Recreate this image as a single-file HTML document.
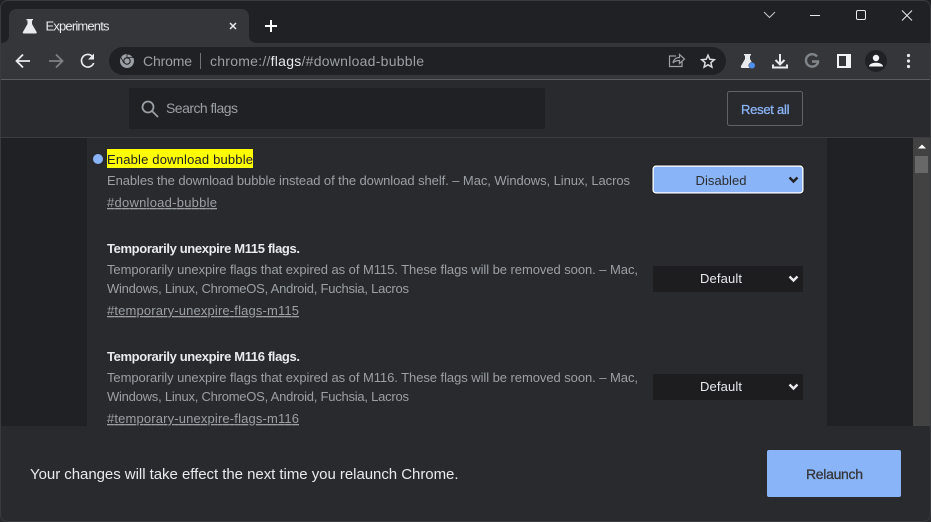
<!DOCTYPE html>
<html><head><meta charset="utf-8"><title>Experiments</title>
<style>
html,body{margin:0;padding:0;background:#202124;width:931px;height:522px;overflow:hidden}
svg{display:block;font-family:"Liberation Sans",sans-serif}
.t{font-size:13px;fill:#9aa0a6}
.b{font-size:13px;font-weight:700;fill:#e8eaed}
.l{font-size:13px;fill:#9aa0a6;text-decoration:underline}
</style></head><body>
<svg width="931" height="522" viewBox="0 0 931 522" xmlns="http://www.w3.org/2000/svg">
<rect width="931" height="522" fill="#202124"/>
<rect x="0" y="0" width="931" height="43" fill="#202124"/>
<!-- tab -->
<path d="M0 43C6 43 9 40 9 36V17C9 12 12 9 17 9H241C246 9 249 12 249 17V36C249 40 252 43 258 43Z" fill="#35363a"/>
<path d="M26.500 19h6.500v1.400h-1v3.600l4.600 8c.4.800 0 1.500-.9 1.500H23.800c-.9 0-1.300-.7-.9-1.500L27.500 24v-3.600h-1z" fill="#e8eaed"/>
<text x="45.500" y="30.500" font-size="13" fill="#e8eaed" textLength="64">Experiments</text>
<path d="M230 23l6 6M236 23l-6 6" stroke="#e8eaed" stroke-width="1.500"/>
<path d="M271 20v12M265 26h12" stroke="#fff" stroke-width="2"/>
<!-- window controls -->
<path d="M764 12l5.500 5.500L775 12" fill="none" stroke="#c4c7cc" stroke-width="1"/>
<path d="M810 15.500h10" stroke="#e8eaed" stroke-width="1"/>
<rect x="856.500" y="10.500" width="9" height="9" rx="1.500" fill="none" stroke="#e8eaed" stroke-width="1"/>
<path d="M902 10.500l10 10M912 10.500l-10 10" stroke="#e8eaed" stroke-width="1"/>
<!-- toolbar -->
<rect x="0" y="43" width="931" height="36" fill="#35363a"/>
<rect x="0" y="79" width="931" height="1" fill="#5a5c60"/>
<path d="M30 61H17M23 54.500L16.500 61l6.500 6.500" fill="none" stroke="#e8eaed" stroke-width="1.800"/>
<path d="M49 61h13M56 54.500l6.500 6.500-6.500 6.500" fill="none" stroke="#7d8287" stroke-width="1.800"/>
<path d="M92.500 56.500A6.300 6.300 0 1 0 93.700 63" fill="none" stroke="#e8eaed" stroke-width="1.700"/>
<path d="M94 53.500v6h-6z" fill="#e8eaed"/>
<rect x="109" y="47" width="617" height="28" rx="14" fill="#202124"/>
<circle cx="127" cy="61" r="7" fill="#9aa0a6"/>
<path d="M127 54a7 7 0 0 1 6.100 3.500H127zM120.900 57.500l3 5.500" stroke="#202124" stroke-width=".8" fill="none"/>
<circle cx="127" cy="61" r="3.200" fill="#9aa0a6" stroke="#202124" stroke-width="1.100"/>
<text x="143" y="66" font-size="14" fill="#9aa0a6" textLength="49">Chrome</text>
<rect x="200" y="53" width="1" height="16" fill="#6f7377"/>
<text x="210" y="66" font-size="14" fill="#9aa0a6" textLength="214">chrome://<tspan fill="#e8eaed">flags</tspan>/#download-bubble</text>
<!-- share -->
<path d="M676 56h-6.500v10.500h12.500V62" fill="none" stroke="#9aa0a6" stroke-width="1.200"/>
<path d="M673 63c.5-3.500 3-5.500 6.500-5.500V54.500l5 4.500-5 4.500v-3c-2.500 0-5 .5-6.500 2.500z" fill="none" stroke="#9aa0a6" stroke-width="1.200"/>
<!-- star -->
<path d="M708 55.200l1.800 4.100 4.500.4-3.400 3 1 4.400-3.900-2.300-3.900 2.300 1-4.400-3.400-3 4.500-.4z" fill="none" stroke="#dadce0" stroke-width="1.500"/>
<!-- flask -->
<path d="M744 54h7v1.500h-1v3.500l4 7c.5 1 0 2-1 2h-11c-1 0-1.500-1-1-2l4-7v-3.500h-1z" fill="#e8eaed"/>
<circle cx="752" cy="65.500" r="3.200" fill="#4f8ff0" stroke="#35363a" stroke-width=".5"/>
<!-- download -->
<path d="M780 54v10M775.500 60l4.500 4.500 4.500-4.500" fill="none" stroke="#e8eaed" stroke-width="2"/>
<path d="M773 64.500v3h14v-3" fill="none" stroke="#e8eaed" stroke-width="2"/>
<!-- G -->
<path d="M817 56.500A6.200 6.200 0 1 0 818 62.500V61.500H812" fill="none" stroke="#80868b" stroke-width="2.400"/>
<!-- side panel -->
<rect x="837" y="54" width="14" height="14" fill="#f1f3f4"/>
<rect x="839" y="56" width="7" height="10" fill="#35363a"/>
<!-- avatar -->
<circle cx="876" cy="61" r="11" fill="#202124"/>
<circle cx="876" cy="58" r="3.200" fill="#f1f3f4"/>
<path d="M869 66.500c0-2.500 3.500-3.800 7-3.800s7 1.300 7 3.800z" fill="#f1f3f4"/>
<!-- menu -->
<circle cx="908.500" cy="55.500" r="1.600" fill="#e8eaed"/><circle cx="908.500" cy="61" r="1.600" fill="#e8eaed"/><circle cx="908.500" cy="66.500" r="1.600" fill="#e8eaed"/>
<!-- header -->
<rect x="0" y="80" width="931" height="57" fill="#292a2d"/>
<rect x="0" y="137" width="931" height="1" fill="#3c3d40"/>
<rect x="129" y="88" width="416" height="41" rx="2" fill="#202124"/>
<circle cx="148" cy="107" r="5.500" fill="none" stroke="#9aa0a6" stroke-width="1.800"/>
<path d="M152 111l6 6" stroke="#9aa0a6" stroke-width="1.800"/>
<text x="166" y="113" font-size="14" fill="#9aa0a6" textLength="72">Search flags</text>
<rect x="727.500" y="91.500" width="75" height="34" rx="2" fill="none" stroke="#5f6368"/>
<text x="741" y="114" font-size="13" fill="#8ab4f8" stroke="#8ab4f8" stroke-width=".3" textLength="48.500">Reset all</text>
<!-- content -->
<rect x="87" y="138" width="740" height="288" fill="#292a2d"/>
<rect x="913" y="138" width="18" height="288" fill="#424242"/>
<path d="M922 144.500l-4 4h8z" fill="#fff"/>
<rect x="915" y="156" width="13" height="17" fill="#686868"/>
<!-- flag 1 -->
<circle cx="98" cy="159" r="5" fill="#8ab4f8"/>
<rect x="107" y="149" width="146" height="19" fill="#ffff00"/>
<text x="107" y="164" font-size="13" fill="#202124" textLength="146">Enable download bubble</text>
<text class="t" x="107" y="185" textLength="523">Enables the download bubble instead of the download shelf. – Mac, Windows, Linux, Lacros</text>
<text class="l" x="107" y="207" textLength="110">#download-bubble</text>
<rect x="653" y="166" width="150" height="27" rx="3" fill="#8ab4f8" stroke="#fff" stroke-width="1.500"/>
<rect x="652" y="165" width="152" height="29" rx="4" fill="none" stroke="#18191b" stroke-width=".8"/>
<text x="695.500" y="185" font-size="13" fill="#2c2d30" textLength="51">Disabled</text>
<path d="M789.500 177.500l4 4 4-4" fill="none" stroke="#202124" stroke-width="2.400"/>
<!-- flag 2 -->
<text class="b" x="107" y="253" textLength="193">Temporarily unexpire M115 flags.</text>
<text class="t" x="107" y="274" textLength="531">Temporarily unexpire flags that expired as of M115. These flags will be removed soon. – Mac,</text>
<text class="t" x="107" y="293" textLength="302">Windows, Linux, ChromeOS, Android, Fuchsia, Lacros</text>
<text class="l" x="107" y="315" textLength="192">#temporary-unexpire-flags-m115</text>
<rect x="653" y="266" width="150" height="26" fill="#1d1d1f"/>
<text x="700" y="283" font-size="13" fill="#e8eaed" textLength="42">Default</text>
<path d="M789.500 276.500l4 4 4-4" fill="none" stroke="#e8eaed" stroke-width="2.400"/>
<!-- flag 3 -->
<text class="b" x="107" y="361" textLength="193">Temporarily unexpire M116 flags.</text>
<text class="t" x="107" y="382" textLength="531">Temporarily unexpire flags that expired as of M116. These flags will be removed soon. – Mac,</text>
<text class="t" x="107" y="401" textLength="302">Windows, Linux, ChromeOS, Android, Fuchsia, Lacros</text>
<text class="l" x="107" y="423" textLength="192">#temporary-unexpire-flags-m116</text>
<rect x="653" y="374" width="150" height="26" fill="#1d1d1f"/>
<text x="700" y="391" font-size="13" fill="#e8eaed" textLength="42">Default</text>
<path d="M789.500 384.500l4 4 4-4" fill="none" stroke="#e8eaed" stroke-width="2.400"/>
<!-- bottom bar -->
<rect x="0" y="426" width="931" height="96" fill="#292a2d"/>
<text x="30" y="479" font-size="15" fill="#e8eaed" textLength="428.500">Your changes will take effect the next time you relaunch Chrome.</text>
<rect x="767" y="450" width="134" height="47" rx="2" fill="#8ab4f8"/>
<text x="806" y="479" font-size="14" fill="#35363a" stroke="#35363a" stroke-width=".3" textLength="57">Relaunch</text>
<!-- window edge -->
<rect x=".5" y=".5" width="930" height="521" rx="7" fill="none" stroke="#3a3b3e"/>
</svg>
</body></html>
